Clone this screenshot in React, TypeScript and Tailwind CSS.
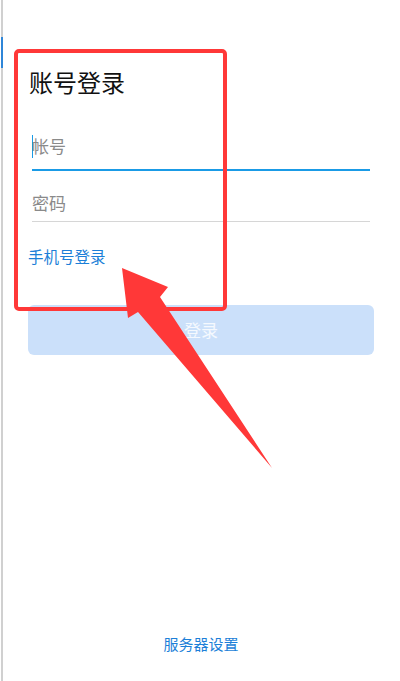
import React from "react";

export default function App() {
  const font = { fontFamily: '"Noto Sans CJK SC", "Noto Sans", sans-serif' };
  return (
    <div className="relative w-[400px] h-[681px] bg-white overflow-hidden flex" style={font}>
      {/* left edge sliver */}
      <div className="w-[3px] h-full flex">
        <div className="w-[1px] h-full bg-white" />
        <div className="w-[2px] h-full bg-[#d0d0d0] flex flex-col">
          <div className="h-[37px]" />
          <div className="h-[31px] bg-[#2f86d8]" />
        </div>
      </div>

      <div className="flex-1 h-full flex flex-col pl-[25px] pr-[26px] pb-[26px]">
        <div className="mt-[66px] text-[24px] leading-[32px] text-[#111] pl-[1px]">账号登录</div>

        <div className="mt-[36px] mx-[4px] border-b-2 border-[#1a9be6] pb-[11px] flex items-center">
          <span className="w-[1px] h-[23px] bg-[#1a9be6] -mr-[1px]" />
          <span className="text-[17px] leading-[24px] text-[#8a8a8a]">帐号</span>
        </div>

        <div className="mt-[20px] mx-[4px] border-b border-[#d6d6d6] pb-[6px]">
          <span className="text-[17px] leading-[24px] text-[#8a8a8a]">密码</span>
        </div>

        <div className="mt-[22px] text-[15.5px] leading-[24px] text-[#1c7fd8]">手机号登录</div>

        <div className="mt-[37px] h-[50px] rounded-[6px] bg-[#cbe0fa] flex items-center justify-center">
          <span className="text-[17px] leading-[24px] text-white/80">登录</span>
        </div>

        <div className="mt-auto text-center text-[15px] leading-[22px] text-[#1c7fd8]">服务器设置</div>
      </div>

      {/* annotation overlay */}
      <div className="absolute left-[14px] top-[49px] w-[213px] h-[262px] border-[4px] border-[#ff3838] rounded-[5px]" />
      <svg className="absolute left-0 top-0 pointer-events-none" width="400" height="681" viewBox="0 0 400 681">
        <polygon
          points="122,268 168,287 160,297 272,468 138,312 128,318"
          fill="#ff3838"
        />
      </svg>
    </div>
  );
}
